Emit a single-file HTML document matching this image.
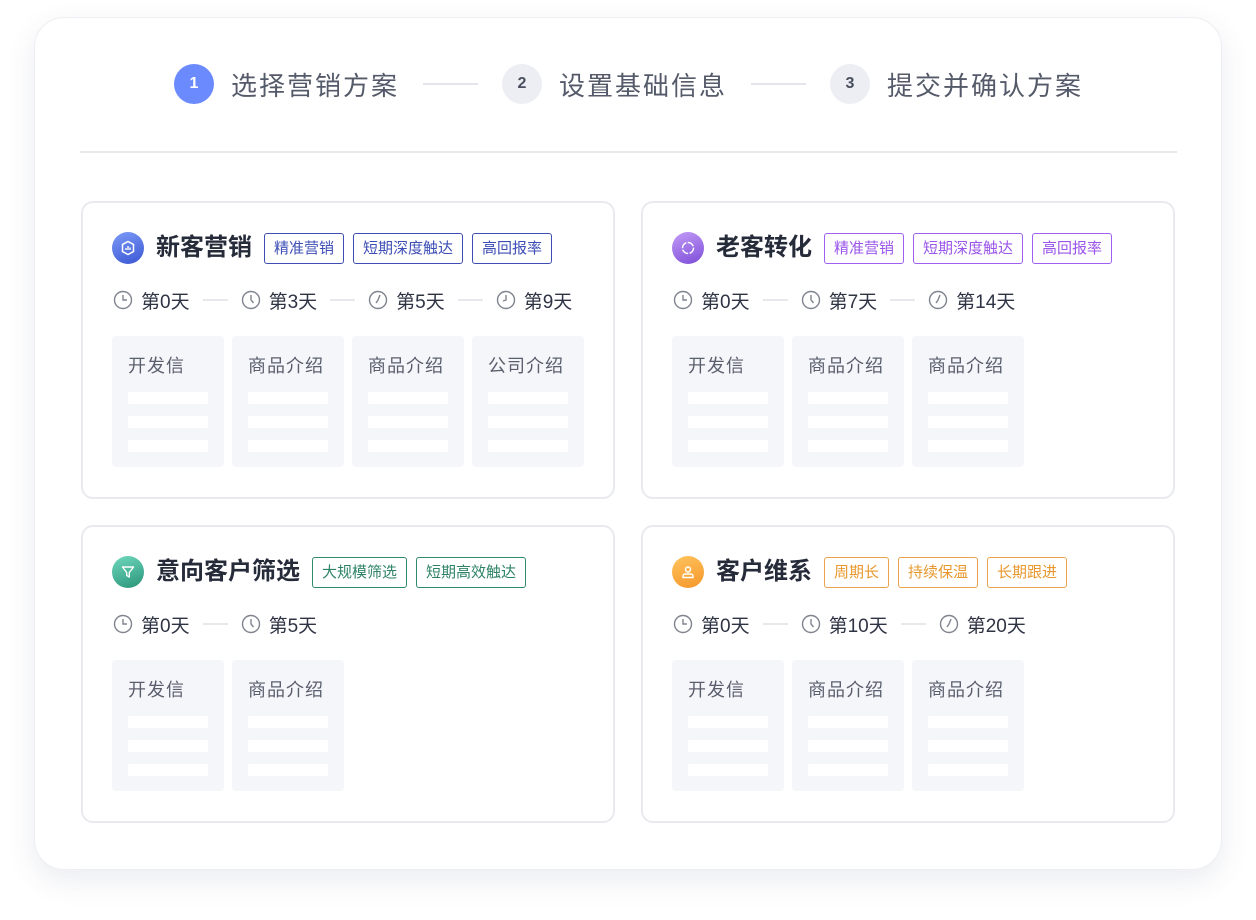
<!DOCTYPE html>
<html><head><meta charset="utf-8"><style>
*{margin:0;padding:0;box-sizing:border-box}
body{width:1256px;height:920px;background:#fff;font-family:"Liberation Sans","Noto Sans CJK SC",sans-serif;position:relative;overflow:hidden}
.outer{position:absolute;left:34px;top:17px;width:1188px;height:853px;border-radius:30px;background:#fff;border:1px solid #eceef2;box-shadow:0 10px 30px rgba(60,70,110,.10)}
.step{position:absolute;top:64px;height:40px;display:flex;align-items:center}
.num{width:40px;height:40px;border-radius:50%;background:#eceef3;color:#4a4f5e;font-size:16px;font-weight:bold;display:flex;align-items:center;justify-content:center;margin-right:17px}
.num.a{background:#6b8afd;color:#fff}
.st{font-size:26px;color:#545a69;letter-spacing:2px}
.sl{position:absolute;top:83px;height:2px;width:55px;background:#e3e5ea}
.div{position:absolute;left:80px;top:151px;width:1097px;height:2px;background:#e6e8ec}
.card{position:absolute;width:534px;height:298px;border:2px solid #e8eaee;border-radius:12px;background:#fff}
.ic{position:absolute;left:29px;top:29px;width:32px;height:32px;border-radius:50%;display:flex;align-items:center;justify-content:center}
.hd{position:absolute;left:73px;top:29px;display:flex;align-items:center;height:32px}
.ti{font-size:24px;font-weight:bold;color:#262b3a;line-height:32px;margin-right:12px}
.tags{display:flex;gap:9px}
.tag{height:31px;border:1px solid;border-radius:3px;padding:0 9px;font-size:15px;line-height:29px}
.tl{position:absolute;left:30px;top:85px;display:flex;align-items:center;height:24px}
.tl svg{display:block}
.tl .t{font-size:19px;color:#2f3444;margin-left:8px}
.tl .ln{width:25px;height:2px;background:#e6e8ec;margin:0 13px}
.boxes{position:absolute;left:29px;top:133px;display:flex;gap:8px}
.bx{width:112px;height:131px;background:#f5f6fa;border-radius:4px;padding:18px 0 0 16px}
.bx .h{font-size:18px;color:#5a5f6d;line-height:24px;height:38px;letter-spacing:1px}
.bx i{display:block;width:80px;height:12px;background:#fff;border-radius:2px;margin-bottom:12px}
</style></head><body>
<div class="outer"></div>
<div class="step" style="left:174px"><div class="num a">1</div><div class="st">选择营销方案</div></div>
<div class="sl" style="left:423px"></div>
<div class="step" style="left:502px"><div class="num">2</div><div class="st">设置基础信息</div></div>
<div class="sl" style="left:751px"></div>
<div class="step" style="left:830px"><div class="num">3</div><div class="st">提交并确认方案</div></div>
<div class="div"></div>

<!-- card 1 -->
<div class="card" style="left:81px;top:201px">
<div class="ic" style="background:linear-gradient(160deg,#7d9bf7,#3a56d3)"><svg width="16" height="16" viewBox="0 0 16 16"><path d="M8 1.5L13.5 4.5V11.5L8 14.5L2.5 11.5V4.5Z" fill="none" stroke="#fff" stroke-width="1.5"/><path d="M6 10V8M8 10V6M10 10V7.5" stroke="#fff" stroke-width="1.4"/></svg></div>
<div class="hd"><div class="ti">新客营销</div>
<div class="tags"><span class="tag" style="color:#3d4fb5;border-color:#3d4fb5">精准营销</span><span class="tag" style="color:#3d4fb5;border-color:#3d4fb5">短期深度触达</span><span class="tag" style="color:#3d4fb5;border-color:#3d4fb5">高回报率</span></div></div>
<div class="tl">
<svg width="20" height="20" viewBox="0 0 20 20"><circle cx="10" cy="10" r="8.5" fill="none" stroke="#80848f" stroke-width="1.4"/><path d="M10 5v5h4" fill="none" stroke="#80848f" stroke-width="1.4"/></svg><span class="t">第0天</span><span class="ln"></span>
<svg width="20" height="20" viewBox="0 0 20 20"><circle cx="10" cy="10" r="8.5" fill="none" stroke="#80848f" stroke-width="1.4"/><path d="M10 5v5l2.5 3" fill="none" stroke="#80848f" stroke-width="1.4"/></svg><span class="t">第3天</span><span class="ln"></span>
<svg width="20" height="20" viewBox="0 0 20 20"><circle cx="10" cy="10" r="8.5" fill="none" stroke="#80848f" stroke-width="1.4"/><path d="M12 5l-2 5-2 3" fill="none" stroke="#80848f" stroke-width="1.4"/></svg><span class="t">第5天</span><span class="ln"></span>
<svg width="20" height="20" viewBox="0 0 20 20"><circle cx="10" cy="10" r="8.5" fill="none" stroke="#80848f" stroke-width="1.4"/><path d="M10 5v5l-3 1" fill="none" stroke="#80848f" stroke-width="1.4"/></svg><span class="t">第9天</span>
</div>
<div class="boxes"><div class="bx"><div class="h">开发信</div><i></i><i></i><i></i></div><div class="bx"><div class="h">商品介绍</div><i></i><i></i><i></i></div><div class="bx"><div class="h">商品介绍</div><i></i><i></i><i></i></div><div class="bx"><div class="h">公司介绍</div><i></i><i></i><i></i></div></div>
</div>

<!-- card 2 -->
<div class="card" style="left:641px;top:201px">
<div class="ic" style="background:linear-gradient(160deg,#c39cf7,#7c4dd8)"><svg width="16" height="16" viewBox="0 0 16 16"><circle cx="8" cy="8" r="5.5" fill="none" stroke="#fff" stroke-width="1.5" stroke-dasharray="7 1.5"/></svg></div>
<div class="hd"><div class="ti">老客转化</div>
<div class="tags"><span class="tag" style="color:#9a55ea;border-color:#a05ff0">精准营销</span><span class="tag" style="color:#9a55ea;border-color:#a05ff0">短期深度触达</span><span class="tag" style="color:#9a55ea;border-color:#a05ff0">高回报率</span></div></div>
<div class="tl">
<svg width="20" height="20" viewBox="0 0 20 20"><circle cx="10" cy="10" r="8.5" fill="none" stroke="#80848f" stroke-width="1.4"/><path d="M10 5v5h4" fill="none" stroke="#80848f" stroke-width="1.4"/></svg><span class="t">第0天</span><span class="ln"></span>
<svg width="20" height="20" viewBox="0 0 20 20"><circle cx="10" cy="10" r="8.5" fill="none" stroke="#80848f" stroke-width="1.4"/><path d="M10 5v5l2.5 3" fill="none" stroke="#80848f" stroke-width="1.4"/></svg><span class="t">第7天</span><span class="ln"></span>
<svg width="20" height="20" viewBox="0 0 20 20"><circle cx="10" cy="10" r="8.5" fill="none" stroke="#80848f" stroke-width="1.4"/><path d="M12 5l-2 5-2 3" fill="none" stroke="#80848f" stroke-width="1.4"/></svg><span class="t">第14天</span>
</div>
<div class="boxes"><div class="bx"><div class="h">开发信</div><i></i><i></i><i></i></div><div class="bx"><div class="h">商品介绍</div><i></i><i></i><i></i></div><div class="bx"><div class="h">商品介绍</div><i></i><i></i><i></i></div></div>
</div>

<!-- card 3 -->
<div class="card" style="left:81px;top:525px">
<div class="ic" style="background:linear-gradient(160deg,#6fd8bd,#2a9479)"><svg width="16" height="16" viewBox="0 0 16 16"><path d="M2.5 3h11L9.3 8.5V13L6.7 11.5V8.5Z" fill="none" stroke="#fff" stroke-width="1.4" stroke-linejoin="round"/></svg></div>
<div class="hd"><div class="ti">意向客户筛选</div>
<div class="tags"><span class="tag" style="color:#2e8366;border-color:#2e8a6c">大规模筛选</span><span class="tag" style="color:#2e8366;border-color:#2e8a6c">短期高效触达</span></div></div>
<div class="tl">
<svg width="20" height="20" viewBox="0 0 20 20"><circle cx="10" cy="10" r="8.5" fill="none" stroke="#80848f" stroke-width="1.4"/><path d="M10 5v5h4" fill="none" stroke="#80848f" stroke-width="1.4"/></svg><span class="t">第0天</span><span class="ln"></span>
<svg width="20" height="20" viewBox="0 0 20 20"><circle cx="10" cy="10" r="8.5" fill="none" stroke="#80848f" stroke-width="1.4"/><path d="M10 5v5l2.5 3" fill="none" stroke="#80848f" stroke-width="1.4"/></svg><span class="t">第5天</span>
</div>
<div class="boxes"><div class="bx"><div class="h">开发信</div><i></i><i></i><i></i></div><div class="bx"><div class="h">商品介绍</div><i></i><i></i><i></i></div></div>
</div>

<!-- card 4 -->
<div class="card" style="left:641px;top:525px">
<div class="ic" style="background:linear-gradient(160deg,#ffc45e,#f5962a)"><svg width="16" height="16" viewBox="0 0 16 16"><circle cx="8" cy="5.5" r="2.5" fill="none" stroke="#fff" stroke-width="1.4"/><path d="M3 13.5v-1.5a2 2 0 0 1 2-2h6a2 2 0 0 1 2 2v1.5Z" fill="none" stroke="#fff" stroke-width="1.4"/></svg></div>
<div class="hd"><div class="ti">客户维系</div>
<div class="tags"><span class="tag" style="color:#e8982e;border-color:#eba24a">周期长</span><span class="tag" style="color:#e8982e;border-color:#eba24a">持续保温</span><span class="tag" style="color:#e8982e;border-color:#eba24a">长期跟进</span></div></div>
<div class="tl">
<svg width="20" height="20" viewBox="0 0 20 20"><circle cx="10" cy="10" r="8.5" fill="none" stroke="#80848f" stroke-width="1.4"/><path d="M10 5v5h4" fill="none" stroke="#80848f" stroke-width="1.4"/></svg><span class="t">第0天</span><span class="ln"></span>
<svg width="20" height="20" viewBox="0 0 20 20"><circle cx="10" cy="10" r="8.5" fill="none" stroke="#80848f" stroke-width="1.4"/><path d="M10 5v5l2.5 3" fill="none" stroke="#80848f" stroke-width="1.4"/></svg><span class="t">第10天</span><span class="ln"></span>
<svg width="20" height="20" viewBox="0 0 20 20"><circle cx="10" cy="10" r="8.5" fill="none" stroke="#80848f" stroke-width="1.4"/><path d="M12 5l-2 5-2 3" fill="none" stroke="#80848f" stroke-width="1.4"/></svg><span class="t">第20天</span>
</div>
<div class="boxes"><div class="bx"><div class="h">开发信</div><i></i><i></i><i></i></div><div class="bx"><div class="h">商品介绍</div><i></i><i></i><i></i></div><div class="bx"><div class="h">商品介绍</div><i></i><i></i><i></i></div></div>
</div>
</body></html>
